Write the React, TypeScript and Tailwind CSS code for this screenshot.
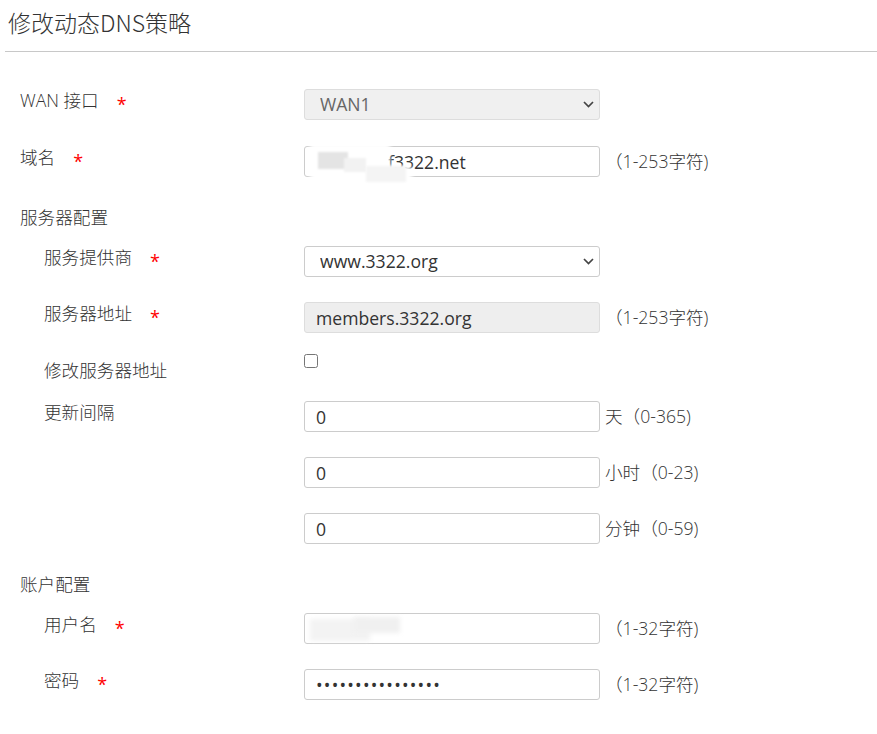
import React from 'react';

const Star = () => <span className="ml-[18px] text-[#f00] text-[18px] font-normal leading-[22px] relative top-[4px]">*</span>;

const Label = ({ text, sub, required }: { text: string; sub?: boolean; required?: boolean }) => (
  <div className={`w-[284px] shrink-0 flex leading-[22px] ${sub ? 'pl-6' : ''}`}>
    <span>{text}</span>
    {required && <Star />}
  </div>
);

const Chevron = () => (
  <svg className="absolute right-[6px] top-[12px] pointer-events-none" width="11" height="7" viewBox="0 0 11 7" fill="none" stroke="#444" strokeWidth="1.7">
    <polyline points="1,1 5.5,5.5 10,1" />
  </svg>
);

const TextInput = ({ value, gray, pl = 'pl-[11px]' }: { value: string; gray?: boolean; pl?: string }) => (
  <input
    readOnly
    defaultValue={value}
    className={`w-[296px] h-[31px] border rounded-[3px] ${pl} outline-none font-normal text-[#333] ${gray ? 'bg-[#eee] border-[#ddd]' : 'bg-white border-[#ccc]'}`}
  />
);

const Hint = ({ text }: { text: string }) => <span className="ml-[5px] leading-[30px]">{text}</span>;

export default function App() {
  return (
    <div className="w-[877px] min-h-[734px] bg-white text-[#333] text-[17.6px] font-light font-['Open_Sans','Noto_Sans_CJK_SC',sans-serif]">
      <h1 className="pl-[8px] pt-[6px] text-[23px] leading-[32px] font-light font-['Noto_Sans_CJK_SC',sans-serif]">修改动态DNS策略</h1>
      <div className="ml-[5px] mt-[13px] h-px bg-[#c8c8c8]" />

      <div className="pl-[20px] pt-[37px]">
        {/* WAN */}
        <div className="flex items-start h-[57px]">
          <Label text="WAN 接口" required />
          <div className="relative">
            <select disabled className="appearance-none w-[296px] h-[31px] bg-[#f0f0f0] border border-[#ddd] rounded-[3px] pl-[15px] font-normal text-[#666] outline-none">
              <option>WAN1</option>
            </select>
            <Chevron />
          </div>
        </div>

        {/* 域名 */}
        <div className="flex items-start h-[56px]">
          <Label text="域名" required />
          <div className="relative">
            <TextInput value="f3322.net" pl="pl-[83px]" />
            <div className="absolute left-[6px] top-[-3px] w-[80px] h-[38px] bg-white blur-[2px]" />
            <div className="absolute left-[50px] top-[20px] w-[58px] h-[18px] bg-white blur-[2px]" />
            <div className="absolute left-[14px] top-[6px] w-[30px] h-[17px] bg-[#e4e4e4] blur-[1px]" />
            <div className="absolute left-[40px] top-[12px] w-[22px] h-[14px] bg-[#f2f2f2] blur-[1px]" />
            <div className="absolute left-[62px] top-[20px] w-[40px] h-[16px] bg-[#f4f4f4] blur-[1px]" />
          </div>
          <Hint text="（1-253字符)" />
        </div>

        {/* 服务器配置 */}
        <div className="mt-[4px] leading-[22px]">服务器配置</div>
        <div className="mt-[18px] flex items-start h-[56px]">
          <Label text="服务提供商" sub required />
          <div className="relative">
            <select className="appearance-none w-[296px] h-[31px] bg-white border border-[#ccc] rounded-[3px] pl-[15px] font-normal text-[#333] outline-none">
              <option>www.3322.org</option>
            </select>
            <Chevron />
          </div>
        </div>
        <div className="flex items-start h-[52px]">
          <Label text="服务器地址" sub required />
          <TextInput value="members.3322.org" gray />
          <Hint text="（1-253字符)" />
        </div>
        <div className="flex items-start h-[47px]">
          <div className="w-[284px] shrink-0 pl-6 leading-[22px] mt-[5px]">修改服务器地址</div>
          <input type="checkbox" className="m-0 w-[14px] h-[14px]" />
        </div>
        <div className="flex items-start h-[56px]">
          <Label text="更新间隔" sub />
          <TextInput value="0" />
          <Hint text="天（0-365)" />
        </div>
        <div className="flex items-start h-[56px]">
          <div className="w-[284px] shrink-0" />
          <TextInput value="0" />
          <Hint text="小时（0-23)" />
        </div>
        <div className="flex items-start h-[56px]">
          <div className="w-[284px] shrink-0" />
          <TextInput value="0" />
          <Hint text="分钟（0-59)" />
        </div>

        {/* 账户配置 */}
        <div className="mt-[4px] leading-[22px]">账户配置</div>
        <div className="mt-[18px] flex items-start h-[56px]">
          <Label text="用户名" sub required />
          <div className="relative">
            <TextInput value="" />
            <div className="absolute left-[6px] top-[6px] w-[60px] h-[22px] bg-[#f3f3f3] blur-[2px]" />
            <div className="absolute left-[50px] top-[4px] w-[46px] h-[16px] bg-[#f0f0f0] blur-[2px]" />
          </div>
          <Hint text="（1-32字符)" />
        </div>
        <div className="flex items-start h-[56px]">
          <Label text="密码" sub required />
          <input
            readOnly
            defaultValue="••••••••••••••••"
            className="w-[296px] h-[31px] border border-[#ccc] rounded-[3px] pl-[11px] outline-none text-[#333] font-normal tracking-[1.2px]"
          />
          <Hint text="（1-32字符)" />
        </div>
      </div>
    </div>
  );
}
